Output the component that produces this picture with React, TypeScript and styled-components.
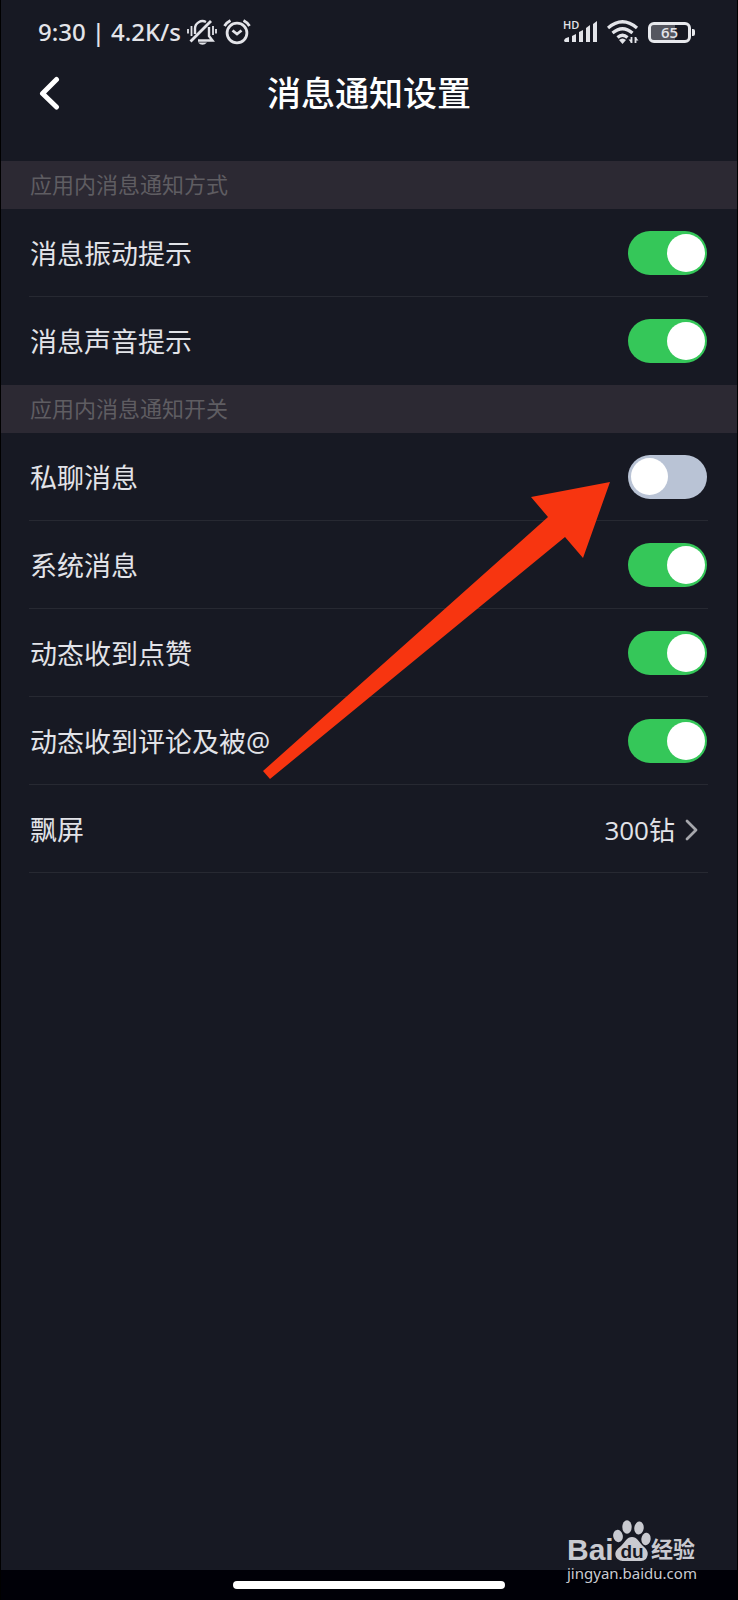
import React, { useState } from "react";
import styled, { createGlobalStyle } from "styled-components";

const GlobalStyle = createGlobalStyle`
  *, *::before, *::after { box-sizing: border-box; }
  body {
    margin: 0;
    background: #000;
    font-family: "Open Sans", "Noto Sans CJK SC", sans-serif;
  }
  button { font: inherit; color: inherit; background: none; border: 0; padding: 0; cursor: pointer; }
`;

const Page = styled.div`
  position: relative;
  display: flex;
  flex-direction: column;
  min-height: 100vh;
  background: #171923;
  border: solid #000;
  border-width: 0 1px;
  color: #e2e3e8;
  overflow: hidden;
`;

const StatusBar = styled.div`
  display: flex;
  align-items: center;
  justify-content: space-between;
  height: 64px;
  padding: 0 46px 0 37px;
  color: #e3e4e9;
`;

const StatusGroup = styled.div<{ $gap: number }>`
  display: flex;
  align-items: center;
  gap: ${(p) => p.$gap}px;
  svg { display: block; }
`;

const StatusText = styled.span`
  display: flex;
  gap: 6px;
  font-family: "Noto Sans", sans-serif;
  font-size: 24px;
  font-weight: 500;
  line-height: 32px;
  white-space: nowrap;
`;

const Signal = styled.div`
  position: relative;
`;

const SignalLabel = styled.span`
  position: absolute;
  left: -1px;
  top: -1px;
  font-size: 11px;
  font-weight: 600;
  line-height: 10px;
`;

const Battery = styled.div`
  position: relative;
  display: flex;
  align-items: center;
  justify-content: center;
  width: 43px;
  height: 21px;
  border: 3px solid #e8e9ed;
  border-radius: 6px;
  background: linear-gradient(90deg, #55565f 65%, #171923 65%);
  background-clip: padding-box;
  font-size: 15px;
  font-weight: 600;
  line-height: 14px;
  &::after {
    content: "";
    position: absolute;
    right: -7px;
    top: 4px;
    width: 3px;
    height: 7px;
    border-radius: 0 2px 2px 0;
    background: #e8e9ed;
  }
`;

const Header = styled.header`
  display: grid;
  grid-template-columns: 60px 1fr 60px;
  align-items: center;
  height: 97px;
  padding: 0 20px 40px;
`;

const BackButton = styled.button`
  display: flex;
  padding: 0 17px;
`;

const Title = styled.h1`
  margin: 0;
  color: #fff;
  font-size: 34px;
  font-weight: 500;
  line-height: 48px;
  text-align: center;
`;

const Section = styled.section``;

const SectionTitle = styled.h2`
  margin: 0;
  padding: 0 29px;
  height: 48px;
  background: #2c2933;
  color: #5f5d62;
  font-size: 22px;
  font-weight: 400;
  line-height: 46px;
`;

const List = styled.div`
  position: relative;
  padding: 0 29px 0 28px;
`;

const Row = styled.label<{ $last?: boolean }>`
  display: flex;
  align-items: center;
  justify-content: space-between;
  width: 100%;
  height: 88px;
  padding: 0 1px;
  border-bottom: 1px solid ${(p) => (p.$last ? "transparent" : "#272932")};
  font-size: 27px;
  line-height: 40px;
`;

const RowLabel = styled.span`
  padding-top: 3px;
`;

const Value = styled.span`
  display: flex;
  align-items: center;
  gap: 10px;
  padding: 2px 9px 0 0;
  font-size: 26px;
`;

const Switch = styled.input`
  appearance: none;
  display: flex;
  align-items: center;
  width: 79px;
  height: 44px;
  margin: 0;
  padding: 0 3px;
  border-radius: 22px;
  background: #b9c3d5;
  cursor: pointer;
  &::before {
    content: "";
    width: 37px;
    height: 37px;
    border-radius: 50%;
    background: #fff;
  }
  &:checked {
    justify-content: flex-end;
    padding: 0 2px;
    background: #35c759;
  }
  &:checked::before {
    width: 38px;
    height: 38px;
  }
`;

const Arrow = styled.svg`
  position: absolute;
  top: 49px;
  right: 127px;
  pointer-events: none;
`;

const NavBar = styled.footer`
  display: flex;
  justify-content: center;
  align-items: center;
  height: 30px;
  margin-top: auto;
  background: #000007;
`;

const HomeHandle = styled.div`
  width: 37%;
  height: 8px;
  border-radius: 4px;
  background: #fff;
`;

const Watermark = styled.div`
  position: absolute;
  right: 38px;
  bottom: 16px;
  width: 132px;
  color: #c9cad0;
`;

const Brand = styled.div`
  display: flex;
  align-items: flex-end;
  height: 42px;
  font-family: "Liberation Sans", "Noto Sans CJK SC", sans-serif;
  font-weight: 700;
  line-height: 24px;
  svg { display: block; }
`;

const BrandLatin = styled.span`
  width: 46px;
  font-size: 30px;
`;

const BrandHan = styled.span`
  font-size: 22px;
  white-space: nowrap;
`;

const Paw = styled.span`
  position: relative;
  width: 38px;
`;

const PawText = styled.span`
  position: absolute;
  left: 0;
  right: 0;
  bottom: 0;
  color: #171923;
  font-size: 19px;
  line-height: 20px;
  text-align: center;
`;

const Site = styled.div`
  font-family: "Noto Sans", sans-serif;
  font-size: 15px;
  line-height: 22px;
  white-space: nowrap;
`;

const MutedBell = () => (
  <svg width="30" height="27" viewBox="0 0 30 27" fill="none" stroke="currentColor" strokeWidth="2.400">
    <path d="M8 15V9.500a7.500 7.500 0 0 1 11-6.500M22 8v9l3.500 4.500H11" />
    <path d="M3.500 22.500L24 2" strokeWidth="2.800" />
    <path d="M11 23.500h9q-4.500 4.500-9 0z" fill="currentColor" stroke="none" />
    <path d="M1 10v4.500M4.500 7v10M26 7v9M29 10v4.500" strokeWidth="1.800" />
  </svg>
);

const AlarmClock = () => (
  <svg width="28" height="26" viewBox="0 0 28 26" fill="none" stroke="currentColor" strokeWidth="2.800">
    <circle cx="14" cy="14" r="9.900" />
    <path d="M1.500 7Q3.500 3.500 7.500 1.500M20.500 1.500Q24.500 3.500 26.500 7M9.500 11.500l4.500 3.500 4.500-3.500" />
  </svg>
);

const SignalBars = () => (
  <svg width="34" height="22" viewBox="0 0 34 22" fill="currentColor">
    <path d="M0 20q0-3 5-4v5H1zM8 15l4-2v8H8zM15 11l4-2v12h-4zM22 7l4-3v17h-4zM29 3l4-3v21h-4z" />
  </svg>
);

const Wifi = () => (
  <svg width="32" height="24" viewBox="0 0 32 24" fill="none" stroke="currentColor">
    <path d="M1 8Q15.500-4.500 30 8M5.500 13Q15.500 4.500 25.500 13M10.500 17.500Q15.500 13 20.500 17.500" strokeWidth="3.200" />
    <path d="M12 20q3.500-3 7 0l-3.500 4z" fill="currentColor" stroke="none" />
    <path d="M24.500 17v6M28.500 23v-6" strokeWidth="1.800" />
    <path d="M21.500 19.500l3 3.500v-3.500zM31.500 20.500l-3-3.500v3.500z" fill="currentColor" stroke="none" />
  </svg>
);

const BackChevron = () => (
  <svg width="22" height="34" viewBox="0 0 22 34" fill="none" stroke="#fff" strokeWidth="5" strokeLinecap="round" strokeLinejoin="round">
    <path d="M18.500 3.500L4.500 17.500l14 13.500" />
  </svg>
);

const NextChevron = () => (
  <svg width="13" height="22" viewBox="0 0 13 22" fill="none" stroke="#a6a7ac" strokeWidth="2.800" strokeLinecap="round" strokeLinejoin="round">
    <path d="M2 2l9 9-9 9" />
  </svg>
);

const PawShape = () => (
  <svg width="38" height="42" viewBox="0 0 38 42" fill="currentColor">
    <ellipse cx="5" cy="16" rx="4.800" ry="6.200" transform="rotate(-12 5 16)" />
    <ellipse cx="14" cy="7" rx="4.700" ry="6.700" />
    <ellipse cx="26" cy="8" rx="4.700" ry="6.500" transform="rotate(8 26 8)" />
    <ellipse cx="33" cy="19" rx="4.600" ry="6.200" transform="rotate(8 33 19)" />
    <path d="M19 17c5 0 7 5 11 9 4 3 6 7 4 11-2 5-7 4-15 4s-13 1-16-4c-2-5 1-8 5-11 4-4 6-9 11-9z" />
  </svg>
);

interface ToggleProps {
  label: string;
  initial: boolean;
  last?: boolean;
}

const ToggleRow = ({ label, initial, last }: ToggleProps) => {
  const [on, setOn] = useState(initial);
  return (
    <Row $last={last}>
      <RowLabel>{label}</RowLabel>
      <Switch type="checkbox" role="switch" checked={on} onChange={(e) => setOn(e.target.checked)} />
    </Row>
  );
};

export default function App() {
  return (
    <>
      <GlobalStyle />
      <Page>
        <StatusBar>
          <StatusGroup $gap={6}>
            <StatusText>
              <span>9:30</span>
              <span>|</span>
              <span>4.2K/s</span>
            </StatusText>
            <MutedBell />
            <AlarmClock />
          </StatusGroup>
          <StatusGroup $gap={9}>
            <Signal>
              <SignalLabel>HD</SignalLabel>
              <SignalBars />
            </Signal>
            <Wifi />
            <Battery>65</Battery>
          </StatusGroup>
        </StatusBar>
        <Header>
          <BackButton aria-label="返回">
            <BackChevron />
          </BackButton>
          <Title>消息通知设置</Title>
        </Header>
        <main>
          <Section>
            <SectionTitle>应用内消息通知方式</SectionTitle>
            <List>
              <ToggleRow label="消息振动提示" initial />
              <ToggleRow label="消息声音提示" initial last />
            </List>
          </Section>
          <Section>
            <SectionTitle>应用内消息通知开关</SectionTitle>
            <List>
              <ToggleRow label="私聊消息" initial={false} />
              <ToggleRow label="系统消息" initial />
              <ToggleRow label="动态收到点赞" initial />
              <ToggleRow label="动态收到评论及被@" initial />
              <Row as="button">
                <RowLabel>飘屏</RowLabel>
                <Value>
                  300钻
                  <NextChevron />
                </Value>
              </Row>
              <Arrow width="347" height="298" viewBox="0 0 347 298" fill="#f73510">
                <path d="M347 0L268 15l17 20L0 289l7 8L302 55l18 21z" />
              </Arrow>
            </List>
          </Section>
        </main>
        <NavBar>
          <HomeHandle />
        </NavBar>
        <Watermark>
          <Brand>
            <BrandLatin>Bai</BrandLatin>
            <Paw>
              <PawShape />
              <PawText>du</PawText>
            </Paw>
            <BrandHan>经验</BrandHan>
          </Brand>
          <Site>jingyan.baidu.com</Site>
        </Watermark>
      </Page>
    </>
  );
}
